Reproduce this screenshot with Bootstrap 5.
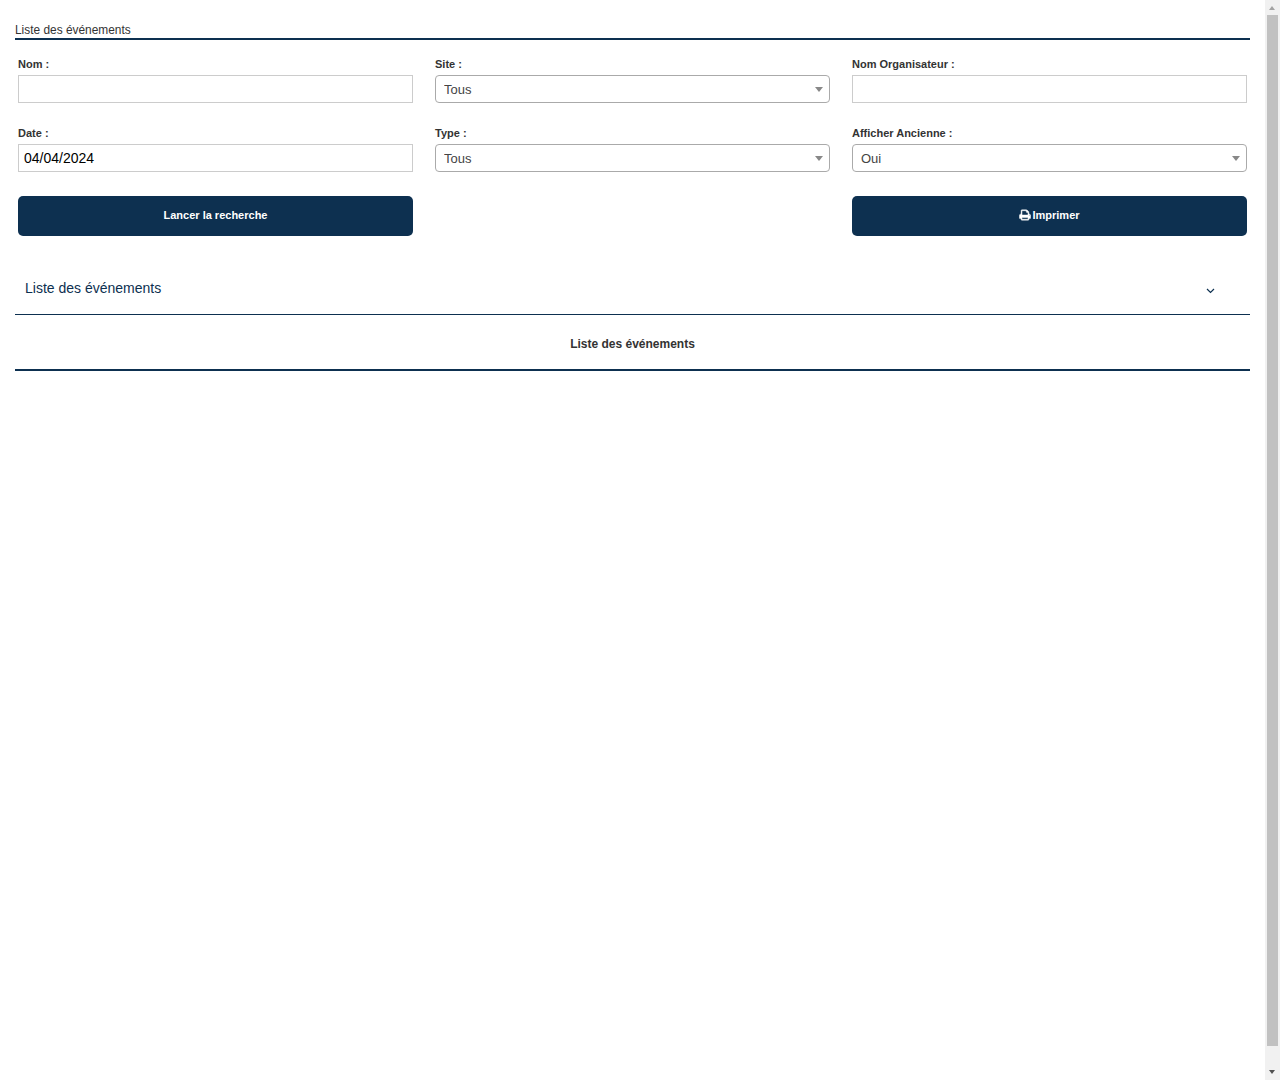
<!doctype html>
<html lang="fr">
<head>
<meta charset="utf-8">
<title>Liste des événements</title>
<link href="https://cdn.jsdelivr.net/npm/bootstrap@5.3.0/dist/css/bootstrap.min.css" rel="stylesheet">
<style>
body { font-family: "Liberation Sans", Arial, sans-serif; color: #212529; background: #fff; }
.page-wrap { padding: 20px 30px 0 15px; }
.page-head { font-size: 11.9px; line-height: 20px; height: 20px; border-bottom: 2px solid #0d3050; color: #333; }
.filter-zone { padding: 0 3px; margin-top: 16px; }
.filter-row { --bs-gutter-x: 22px; --bs-gutter-y: 0; }
.filter-cell { height: 69px; }
.filter-label { display: block; font-size: 11px; font-weight: 700; line-height: 16px; height: 19px; margin: 0; color: #333; }
.filter-input { display: block; width: 100%; height: 28px; border: 1px solid #ccc; border-radius: 0; padding: 0 5px; font-size: 14px; color: #000; background: #fff; outline: 0; font-family: inherit; }
.filter-select { display: block; width: 100%; height: 28px; border: 1px solid #aaa; border-radius: 4px; padding: 2px 24px 0 8px; font-size: 13px; color: #444; background-color: #fff; appearance: none; font-family: inherit; outline: 0;
  background-image: url("data:image/svg+xml,%3Csvg xmlns='http://www.w3.org/2000/svg' width='8' height='5'%3E%3Cpolygon points='0,0 8,0 4,5' fill='%23888'/%3E%3C/svg%3E");
  background-size: 8px 5px; background-repeat: no-repeat; background-position: right 6px top 11px; }
.action-row { margin-top: 2px; }
.action-btn { display: flex; align-items: center; justify-content: center; gap: 1px; width: 100%; height: 40px; border: 0; border-radius: 5px; background: #0d3050; color: #fff; font-size: 11px; font-weight: 700; padding: 0 0 2px; }
.section-bar { height: 52px; margin-top: 27px; border-bottom: 1px solid #0d3050; padding: 0 10px; }
.section-title { font-size: 14px; color: #0d3050; line-height: 50px; margin-top: -2px; }
.section-sub { height: 56px; border-bottom: 2px solid #0d3050; font-size: 12px; font-weight: 700; color: #333; line-height: 58px; text-align: center; }
.chev { margin-right: 25px; margin-top: 5px; }
.fake-scroll { position: fixed; top: 0; right: 0; bottom: 0; width: 15px; background: #f1f1f1; }
.fake-thumb { position: absolute; top: 15px; left: 2px; width: 11px; height: 1031px; background: #c1c1c1; }
.fake-up, .fake-down { position: absolute; left: 4px; width: 0; height: 0; border-left: 3.5px solid transparent; border-right: 3.5px solid transparent; }
.fake-up { top: 6px; border-bottom: 4px solid #a3a3a3; }
.fake-down { bottom: 6px; border-top: 4px solid #505050; }
</style>
</head>
<body>
<div class="page-wrap">
  <div class="page-head">Liste des événements</div>
  <div class="filter-zone">
    <div class="row filter-row">
      <div class="col-4 filter-cell"><label class="filter-label" for="f-nom">Nom :</label><input id="f-nom" class="filter-input" type="text"></div>
      <div class="col-4 filter-cell"><label class="filter-label" for="f-site">Site :</label><select id="f-site" class="filter-select"><option>Tous</option></select></div>
      <div class="col-4 filter-cell"><label class="filter-label" for="f-org">Nom Organisateur :</label><input id="f-org" class="filter-input" type="text"></div>
      <div class="col-4 filter-cell"><label class="filter-label" for="f-date">Date :</label><input id="f-date" class="filter-input" type="text" value="04/04/2024"></div>
      <div class="col-4 filter-cell"><label class="filter-label" for="f-type">Type :</label><select id="f-type" class="filter-select"><option>Tous</option></select></div>
      <div class="col-4 filter-cell"><label class="filter-label" for="f-anc">Afficher Ancienne :</label><select id="f-anc" class="filter-select"><option>Oui</option></select></div>
    </div>
    <div class="row filter-row action-row">
      <div class="col-4"><button class="action-btn" type="button">Lancer la recherche</button></div>
      <div class="col-4"></div>
      <div class="col-4"><button class="action-btn" type="button">
        <svg width="12" height="12" viewBox="0 0 1792 1792" aria-hidden="true"><path fill="#fff" stroke="#fff" stroke-width="70" d="M448 1536h896v-256h-896v256zm0-640h896v-384h-160q-40 0-68-28t-28-68v-160h-640v640zm1152 64q0-26-19-45t-45-19-45 19-19 45 19 45 45 19 45-19 19-45zm128 0v416q0 13-9.5 22.5t-22.5 9.5h-224v160q0 40-28 68t-68 28h-960q-40 0-68-28t-28-68v-160h-224q-13 0-22.5-9.5t-9.5-22.5v-416q0-79 56.5-135.5t135.5-56.5h64v-544q0-40 28-68t68-28h672q40 0 88 20t76 48l152 152q28 28 48 76t20 88v256h64q79 0 135.5 56.5t56.5 135.5z"/></svg>
        Imprimer</button></div>
    </div>
  </div>
  <div class="section-bar d-flex justify-content-between align-items-center">
    <span class="section-title">Liste des événements</span>
    <svg class="chev" width="9" height="6" viewBox="0 0 9 6" aria-hidden="true"><path d="M1 1L4.5 4.5L8 1" fill="none" stroke="#0d3050" stroke-width="1.2"/></svg>
  </div>
  <div class="section-sub">Liste des événements</div>
</div>
<div class="fake-scroll" aria-hidden="true"><div class="fake-up"></div><div class="fake-thumb"></div><div class="fake-down"></div></div>
<script src="https://cdn.jsdelivr.net/npm/bootstrap@5.3.0/dist/js/bootstrap.bundle.min.js"></script>
</body>
</html>
